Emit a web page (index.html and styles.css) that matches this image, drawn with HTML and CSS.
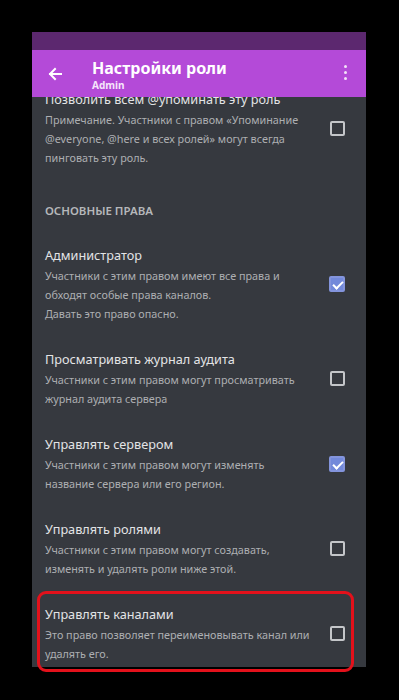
FILE: index.html
```html
<!DOCTYPE html>
<html lang="ru">
<head>
  <meta charset="UTF-8">
  <meta name="viewport" content="width=device-width, initial-scale=1.0">
  <title>Настройки роли</title>
  <link rel="stylesheet" href="styles.css">
</head>
<body>

  <div class="phone">
    <!-- Status bar -->
    <div class="status-bar"></div>

    <!-- App bar -->
    <div class="app-bar">
      <svg class="back" width="16" height="16" viewBox="0 0 16 16">
        <path d="M14 8H3M8 3L3 8l5 5" fill="none" stroke="#fff" stroke-width="2" stroke-linecap="square"/>
      </svg>
      <div class="app-title">
        <div class="title">Настройки роли</div>
        <div class="subtitle">Admin</div>
      </div>
      <div class="kebab"><span></span><span></span><span></span></div>
    </div>

    <!-- Permission list -->
    <div class="content">
      <div class="list">
        <div class="perm">
          <div class="perm-text">
            <div class="perm-name">Позволить всем @упоминать эту роль</div>
            <div class="perm-desc">Примечание. Участники с правом «Упоминание<br>@everyone, @here и всех ролей» могут всегда<br>пинговать эту роль.</div>
          </div>
          <span class="checkbox"></span>
        </div>

        <div class="section">ОСНОВНЫЕ ПРАВА</div>

        <div class="perm">
          <div class="perm-text">
            <div class="perm-name">Администратор</div>
            <div class="perm-desc">Участники с этим правом имеют все права и<br>обходят особые права каналов.<br>Давать это право опасно.</div>
          </div>
          <span class="checkbox checked"></span>
        </div>

        <div class="perm">
          <div class="perm-text">
            <div class="perm-name">Просматривать журнал аудита</div>
            <div class="perm-desc">Участники с этим правом могут просматривать<br>журнал аудита сервера</div>
          </div>
          <span class="checkbox"></span>
        </div>

        <div class="perm">
          <div class="perm-text">
            <div class="perm-name">Управлять сервером</div>
            <div class="perm-desc">Участники с этим правом могут изменять<br>название сервера или его регион.</div>
          </div>
          <span class="checkbox checked"></span>
        </div>

        <div class="perm">
          <div class="perm-text">
            <div class="perm-name">Управлять ролями</div>
            <div class="perm-desc">Участники с этим правом могут создавать,<br>изменять и удалять роли ниже этой.</div>
          </div>
          <span class="checkbox"></span>
        </div>

        <div class="perm">
          <div class="perm-text">
            <div class="perm-name">Управлять каналами</div>
            <div class="perm-desc">Это право позволяет переименовывать канал или<br>удалять его.</div>
          </div>
          <span class="checkbox"></span>
        </div>
      </div>
    </div>

    <!-- Highlight frame -->
    <div class="highlight"></div>
  </div>

</body>
</html>
```

FILE: styles.css
```css
body {
  margin: 0;
  background: #000;
  font-family: 'Noto Sans', 'Open Sans', sans-serif;
  min-height: 700px;
}

.phone {
  position: relative;
  width: 334px;
  margin: 32px 0 0 32px;
}

.status-bar {
  height: 18px;
  background: #5c286f;
}

/* App bar */
.app-bar {
  height: 47px;
  background: #b44ad8;
  display: flex;
  align-items: center;
  color: #fff;
}

.app-bar .back {
  margin: 0 0 0 15px;
}

.app-title {
  flex: 1;
  margin-left: 29px;
  margin-top: 2px;
}

.app-title .title {
  font-size: 16px;
  font-weight: 700;
  line-height: 21px;
}

.app-title .subtitle {
  font-size: 10px;
  font-weight: 700;
  line-height: 13px;
  color: #f6e6fb;
}

.kebab {
  display: flex;
  flex-direction: column;
  gap: 2.5px;
  margin-right: 19px;
  margin-top: -2px;
}

.kebab span {
  width: 3.5px;
  height: 3.5px;
  border-radius: 50%;
  background: #f3e2f8;
}

/* Content */
.content {
  height: 570px;
  background: #36393f;
  overflow: hidden;
}

.list {
  margin-top: -21px;
}

.perm {
  display: flex;
  align-items: center;
  padding: 13px 21px 13px 13px;
}

.perm-text {
  flex: 1;
}

.perm-name {
  font-size: 12.7px;
  line-height: 21px;
  color: #e3e4e6;
}

.perm-desc {
  font-size: 10.8px;
  line-height: 19px;
  color: #adafb2;
  white-space: nowrap;
}

.section {
  padding: 23px 13px 13px;
  font-size: 11.5px;
  font-weight: 600;
  line-height: 16px;
  color: #b5b7ba;
}

.checkbox {
  position: relative;
  flex-shrink: 0;
  width: 15px;
  height: 15px;
  box-sizing: border-box;
  border: 2px solid #c4c6c9;
  border-radius: 2px;
}

.checkbox.checked {
  width: 16px;
  height: 16px;
  background: #7289da;
  border-color: #8394dc;
}

.checkbox.checked::after {
  content: '';
  position: absolute;
  left: 3.5px;
  top: 1px;
  width: 4px;
  height: 8px;
  border: solid #fff;
  border-width: 0 2px 2px 0;
  transform: rotate(45deg);
}

/* Red annotation frame */
.highlight {
  position: absolute;
  left: 5px;
  top: 559px;
  width: 317px;
  height: 81px;
  box-sizing: border-box;
  border: 3px solid #e3111b;
  border-radius: 9px;
}
```
